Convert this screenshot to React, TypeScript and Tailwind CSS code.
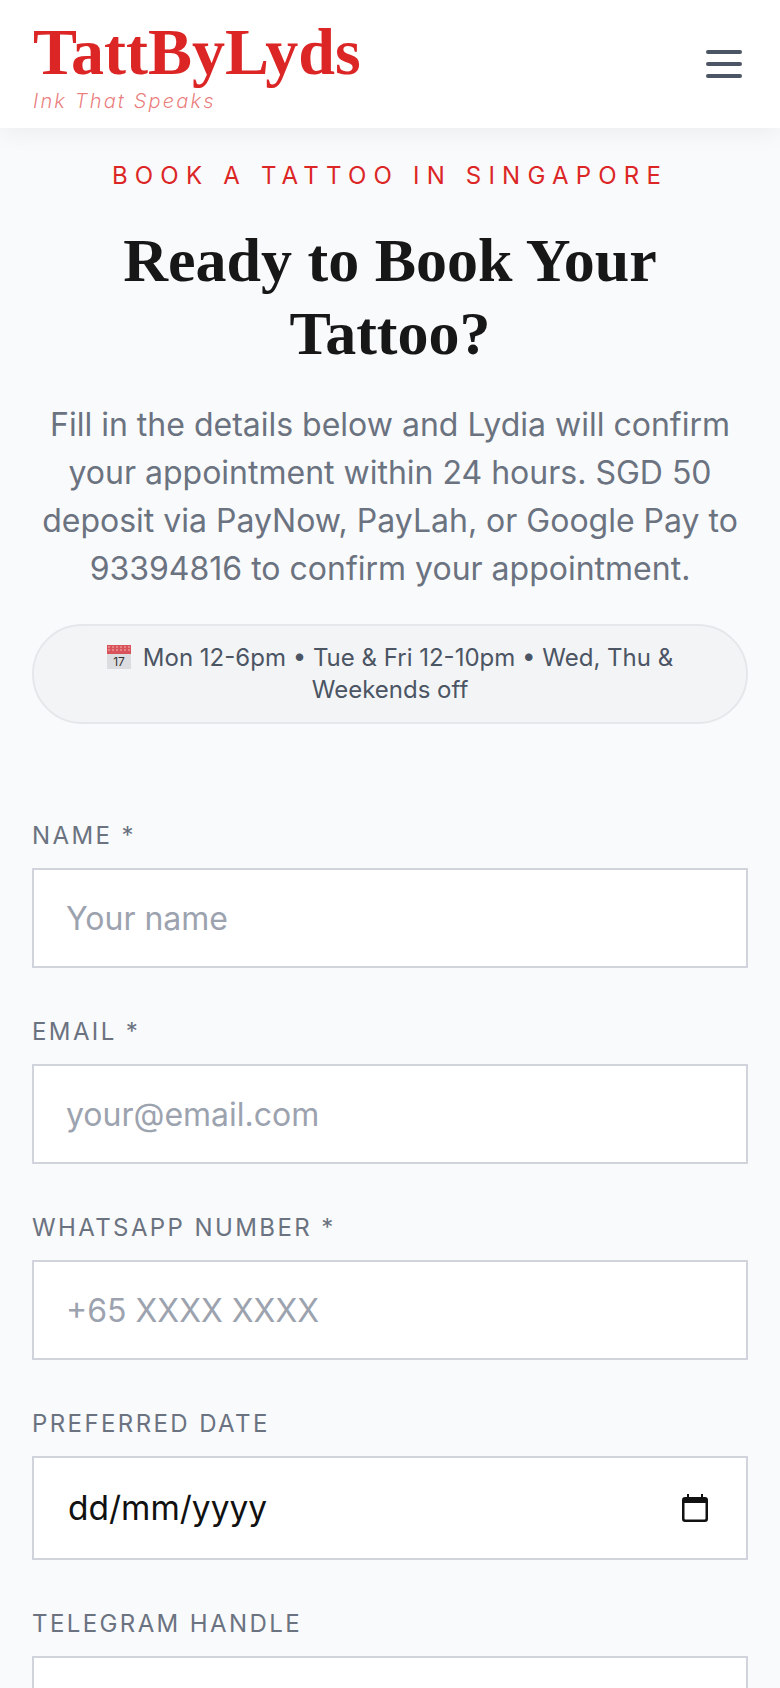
const fields = [
  { label: 'Name *', placeholder: 'Your name', type: 'text' },
  { label: 'Email *', placeholder: 'your@email.com', type: 'email' },
  { label: 'WhatsApp Number *', placeholder: '+65 XXXX XXXX', type: 'tel' },
];

function CalendarEmoji() {
  return (
    <svg className="inline-block w-6 h-6 mr-3 align-[-3px]" viewBox="0 0 24 24">
      <rect x="0" y="0" width="24" height="24" fill="#dcdde0" />
      <rect x="0" y="0" width="24" height="9" fill="#d9535a" />
      <path d="M1 2h22M1 5h22" stroke="#f0b5b5" strokeWidth="1" strokeDasharray="2 2" />
      <text x="12" y="21" textAnchor="middle" fontSize="12" fill="#333" fontFamily="Inter, sans-serif">17</text>
    </svg>
  );
}

export default function App() {
  return (
    <div className="min-h-[1688px] h-[1688px] overflow-hidden bg-[#f9fafb] font-['Inter',sans-serif]">
      {/* Header */}
      <header className="relative z-10 h-[128px] bg-white px-8 flex justify-between items-center shadow-[0_4px_24px_rgba(0,0,0,0.06)]">
        <div>
          <div className="ml-px font-['Liberation_Serif',serif] font-bold text-[#dc2626] text-[66px] leading-[72px]">
            TattByLyds
          </div>
          <div className="mt-px ml-px text-[20px] leading-[24px] italic font-light text-[#dc2626]/60 tracking-[2.15px]">
            Ink That Speaks
          </div>
        </div>
        <button type="button" aria-label="Menu" className="text-[#4b5563]">
          <svg className="w-12 h-12" fill="none" stroke="currentColor" viewBox="0 0 24 24">
            <path strokeLinecap="round" strokeLinejoin="round" strokeWidth={2} d="M4 6h16M4 12h16M4 18h16" />
          </svg>
        </button>
      </header>

      <main className="px-8">
        {/* Intro */}
        <section className="text-center pt-[33px]">
          <p className="text-[24px] leading-[30px] text-[#dc2626] tracking-[7.2px] uppercase">
            Book a Tattoo in Singapore
          </p>
          <h1 className="mt-[33px] font-['Liberation_Serif',serif] font-bold text-[#171717] text-[62px] leading-[73px]">
            Ready to Book Your Tattoo?
          </h1>
          <p className="mt-[31px] text-[32px] leading-[48px] text-[#6b7280]">
            Fill in the details below and Lydia will confirm your appointment within 24 hours. SGD 50 deposit via PayNow, PayLah, or Google Pay to 93394816 to confirm your appointment.
          </p>
          <div className="mt-[31px] h-[100px] rounded-[50px] border-2 border-[#e5e7eb] bg-[#f3f4f6] px-8 pt-[16px] text-[24px] leading-[32px] text-[#4b5563]">
            <CalendarEmoji />
            Mon 12-6pm • Tue &amp; Fri 12-10pm • Wed, Thu &amp; Weekends off
          </div>
        </section>

        {/* Form */}
        <form className="mt-[94px]">
          {fields.map((f) => (
            <div key={f.label} className="mb-[46px]">
              <label className="block mb-[14px] text-[24px] leading-[36px] uppercase tracking-[2.4px] text-[#6b7280]">
                {f.label}
              </label>
              <input
                type={f.type}
                placeholder={f.placeholder}
                className="block w-full h-[100px] border-2 border-[#d1d5db] bg-white px-8 text-[32px] outline-none placeholder:text-[#9ca3af]"
              />
            </div>
          ))}
          <div className="mb-[46px]">
            <label className="block mb-[14px] text-[24px] leading-[36px] uppercase tracking-[2.4px] text-[#6b7280]">
              Preferred Date
            </label>
            <div className="flex items-center justify-between h-[104px] border-2 border-[#d1d5db] bg-white pl-[34px] pr-[38px] text-[33.5px] text-[#111]">
              <span>dd/mm/yyyy</span>
              <svg className="w-[26px] h-[28px]" viewBox="0 0 26 28">
                <path d="M5 0h2v3h12V0h2v3h2a3 3 0 0 1 3 3v19a3 3 0 0 1-3 3H3a3 3 0 0 1-3-3V6a3 3 0 0 1 3-3h2V0zM2.500 9v15.500a1 1 0 0 0 1 1h19a1 1 0 0 0 1-1V9h-21z" fill="#111" fillRule="evenodd" />
              </svg>
            </div>
          </div>
          <div>
            <label className="block mb-[14px] text-[24px] leading-[36px] uppercase tracking-[2.4px] text-[#6b7280]">
              Telegram Handle
            </label>
            <input
              type="text"
              className="block w-full h-[100px] border-2 border-[#d1d5db] bg-white px-8 text-[32px] outline-none"
            />
          </div>
        </form>
      </main>
    </div>
  );
}
